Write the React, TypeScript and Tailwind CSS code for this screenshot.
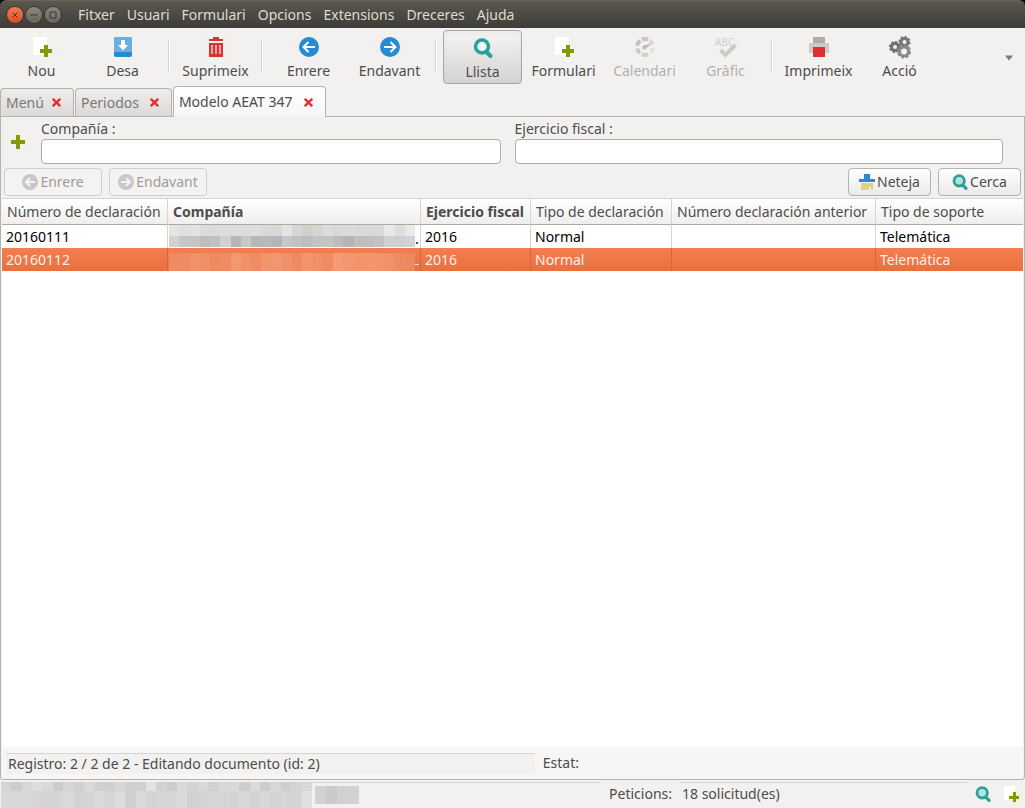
import clsx from "clsx";
import type { ReactNode } from "react";

const menus = [
  "Fitxer",
  "Usuari",
  "Formulari",
  "Opcions",
  "Extensions",
  "Dreceres",
  "Ajuda",
];

type Tool = {
  label: string;
  icon: ReactNode;
  active?: boolean;
  disabled?: boolean;
};

const toolGroups: Tool[][] = [
  [
    { label: "Nou", icon: <NewIcon /> },
    { label: "Desa", icon: <SaveIcon /> },
  ],
  [{ label: "Suprimeix", icon: <TrashIcon /> }],
  [
    { label: "Enrere", icon: <ArrowIcon /> },
    { label: "Endavant", icon: <ArrowIcon forward /> },
  ],
  [
    { label: "Llista", icon: <SearchIcon />, active: true },
    { label: "Formulari", icon: <NewIcon /> },
    { label: "Calendari", icon: <GaugeIcon />, disabled: true },
    { label: "Gràfic", icon: <SpellIcon />, disabled: true },
  ],
  [
    { label: "Imprimeix", icon: <PrintIcon /> },
    { label: "Acció", icon: <GearsIcon /> },
  ],
];

const columns = [
  { label: "Número de declaración", width: "w-[166px]" },
  { label: "Compañía", width: "w-[253px]", bold: true },
  { label: "Ejercicio fiscal", width: "w-[110px]", bold: true },
  { label: "Tipo de declaración", width: "w-[141px]" },
  { label: "Número declaración anterior", width: "w-[204px]" },
  { label: "Tipo de soporte", width: "" },
];

const greyTop =
  "#e4e4e4 #e0dfde #e3e2e1 #dadddf #d9dcde #dddddd #e0dcdc #dddbdc #dcdfe2 #d9d9d9 #d8d8d9 #e4e4e3 #d6d6d6 #d0d0cf #d5d5d4 #dcdcdc #d8d8d8 #dbdbdb #d9d9d9 #dcd8d9 #d9d9da #e7e9eb #dedede #e9e9e9";
const greyBottom =
  "#d4d1ce #c4c7c9 #c7c3c2 #bcbdbe #bfc2c3 #d4d0cf #b5b5ba #cac7c4 #b7b7bb #b9b9bb #b4b5b8 #c6c7ca #c3c1c2 #bdbebf #c3c2c4 #c4c4c4 #bdbdc0 #b4b4b5 #c0bfc0 #bfbfc0 #c3c3c6 #d0d0d2 #cfcfd2 #d3d1d3";
const orangeBlocks =
  "#f08a60 #f08b63 #f1906a #f08e67 #ef8960 #f08b62 #f39871 #f1906a #f08b63 #f1936b #f3966f #f1916a #f08a61 #f3946e #f28f68 #ef8a61 #f59b74 #f4966f #f2936b #f3956d #f2936b #f1906a #ef8a61 #ee885f";
const userTop =
  "#d5d5d5 #cccdcf #d8d8d7 #dedede #d9d9d9 #cbcccc #d6d6d6 #d1d1d1 #dadada #d3d0ce #cfd0d2 #d7d7d7 #d3cfcd #d0d0d1 #e0e2e4 #d2d2d3 #cdcccd #d9d9d9 #d2d2d2 #d9d9da #d1d1d1 #d8d8d7 #d9d9da #cdcdcf #dadada #cbccce #d8d8d8 #d0cdca #d4d4d5 #d8d8d8";
const userBottom =
  "#d8d8d7 #d5d8d7 #d7d7d8 #d7d6d5 #d4d4d3 #d5d6d5 #dadada #d2d3d3 #d5d5d4 #dad9d9 #d4d5d5 #dcdcdb #cfd0cf #dadada #d4d4d4 #d6d6d7 #d6d6d5 #dadada #d1d1d2 #d3d3d3 #d5d5d6 #d6d6d6 #d4d4d4 #d7d7d6 #d3d3d3 #d8d8d8 #d4d4d4 #d6d6d6 #d2d4d8 #dfdfe0";

export default function App() {
  return (
    <div className="flex min-h-screen flex-col bg-[#f2f1f0] font-['Noto_Sans','Open_Sans',sans-serif] text-sm leading-5 text-[#4c4c4c]">
      <TitleBar />
      <Toolbar />
      <TabBar />
      <main className="flex flex-1 flex-col rounded-b-sm border-x border-b border-[#b6b3ae] px-px">
        <SearchForm />
        <div className="flex-1 bg-white">
          <ResultsTable />
        </div>
        <div className="flex h-8 items-center bg-[#f6f6f6] pl-1">
          <div className="h-[21px] w-[52%] border-t border-[#d7d5d3] bg-[#f2f1f0] pl-0.5">
            Registro: 2 / 2 de 2 - Editando documento (id: 2)
          </div>
          <div className="pl-2">Estat:</div>
        </div>
      </main>
      <StatusBar />
    </div>
  );
}

function TitleBar() {
  return (
    <header className="bg-black">
      <div className="flex h-7 items-center rounded-t-md border-t border-[#66645b] bg-linear-to-b from-[#5b584f] to-[#3d3c37] pl-[7px]">
        <div className="flex gap-[3px]">
          <WindowButton label="Close" close>
            <path d="M5.5 5.5l5 5M10.5 5.5l-5 5" />
          </WindowButton>
          <WindowButton label="Minimize">
            <path d="M4.500 8h7" />
          </WindowButton>
          <WindowButton label="Maximize">
            <path d="M5 5h6v6H5z" />
          </WindowButton>
        </div>
        <nav className="ml-[17px] flex gap-3 text-[#dfdbd2]">
          {menus.map((menu) => (
            <button key={menu} type="button">
              {menu}
            </button>
          ))}
        </nav>
      </div>
    </header>
  );
}

function WindowButton({
  label,
  close,
  children,
}: {
  label: string;
  close?: boolean;
  children: ReactNode;
}) {
  return (
    <button
      aria-label={label}
      className={clsx(
        "size-4 rounded-full ring-1 ring-[#35342f]",
        close
          ? "bg-linear-to-b from-[#f47c54] to-[#df4b1c]"
          : "bg-linear-to-b from-[#8b897f] to-[#66645b]",
      )}
      type="button"
    >
      <svg className="size-4" fill="none" stroke="#3c3b37" viewBox="0 0 16 16">
        {children}
      </svg>
    </button>
  );
}

function Toolbar() {
  return (
    <div className="flex h-[58px] items-start justify-between pt-0.5 pr-3 pl-px">
      <div className="flex">
        {toolGroups.map((group, index) => (
          <div className="flex" key={group[0].label}>
            {index > 0 && (
              <div className="mx-[5px] mt-2.5 h-8 w-0.5 border-l border-[#d6d4d2] bg-white" />
            )}
            {group.map((tool) => (
              <ToolButton key={tool.label} tool={tool} />
            ))}
          </div>
        ))}
      </div>
      <button aria-label="More" className="mt-[25px]" type="button">
        <svg className="h-[6px] w-2" viewBox="0 0 8 6">
          <path d="M0 .5h8L4 5.500z" fill="#7b7975" />
        </svg>
      </button>
    </div>
  );
}

function ToolButton({ tool }: { tool: Tool }) {
  return (
    <button
      className={clsx(
        "flex h-[54px] flex-col items-center border",
        tool.active
          ? "mx-px w-[79px] rounded border-[#a9a6a2] bg-linear-to-b from-[#f4f4f3] to-[#d6d4d2] pt-[7px] shadow-inner"
          : "w-[81px] border-transparent pt-1.5",
        tool.disabled && "text-[#b3b0ad]",
      )}
      disabled={tool.disabled}
      type="button"
    >
      {tool.icon}
      <span className="mt-1">{tool.label}</span>
    </button>
  );
}

function TabBar() {
  return (
    <div className="flex h-[31px] items-end gap-px border-b border-[#b6b3ae]">
      <Tab className="min-w-[73px]" label="Menú" />
      <Tab className="min-w-[97px]" label="Periodos" />
      <Tab active className="min-w-[153px]" label="Modelo AEAT 347" />
    </div>
  );
}

function Tab({
  label,
  active,
  className,
}: {
  label: string;
  active?: boolean;
  className: string;
}) {
  return (
    <div
      className={clsx(
        "flex items-center justify-between gap-2 rounded-t border border-b-0 border-[#b6b3ae] pr-3 pl-[5px]",
        active
          ? "-mb-px h-[31px] bg-linear-to-b from-white to-[#f6f6f6]"
          : "h-7 bg-linear-to-b from-[#ededec] to-[#dcdad8] text-[#7b7875]",
        className,
      )}
    >
      <button type="button">{label}</button>
      <button aria-label={`Tanca ${label}`} type="button">
        <svg
          className="size-[9px]"
          stroke="#dc322f"
          strokeWidth="2.400"
          viewBox="0 0 9 9"
        >
          <path d="M.8.8l7.400 7.400M8.200.8L.8 8.200" />
        </svg>
      </button>
    </div>
  );
}

function SearchForm() {
  return (
    <form className="border-b border-[#d7d5d3] pb-0.5">
      <div className="flex pt-0.5 pr-5">
        <button
          aria-label="Afegeix"
          className="flex w-[39px] items-center pl-[9px]"
          type="button"
        >
          <svg className="size-3.5" fill="#859900" viewBox="0 0 14 14">
            <path d="M5 0h4v5h5v4H9v5H5V9H0V5h5z" />
          </svg>
        </button>
        <div className="flex flex-1 gap-3.5">
          <Field className="flex-[460]" id="company" label="Compañía :" />
          <Field className="flex-[489]" id="year" label="Ejercicio fiscal :" />
        </div>
      </div>
      <div className="mt-1 flex justify-between pr-0.5 pl-0.5">
        <div className="flex gap-[7px]">
          <FormButton disabled icon={<SmallArrowIcon />} label="Enrere" />
          <FormButton
            disabled
            icon={<SmallArrowIcon forward />}
            label="Endavant"
          />
        </div>
        <div className="flex gap-[7px]">
          <FormButton icon={<BrushIcon />} label="Neteja" />
          <FormButton icon={<SearchIcon small />} label="Cerca" />
        </div>
      </div>
    </form>
  );
}

function Field({
  id,
  label,
  className,
}: {
  id: string;
  label: string;
  className: string;
}) {
  return (
    <div className={className}>
      <label className="block" htmlFor={id}>
        {label}
      </label>
      <input
        className="block h-[25px] w-full rounded border border-[#aeaba7] bg-white px-1.5"
        id={id}
        type="text"
      />
    </div>
  );
}

function FormButton({
  icon,
  label,
  disabled,
}: {
  icon: ReactNode;
  label: string;
  disabled?: boolean;
}) {
  return (
    <button
      className={clsx(
        "flex h-7 items-center justify-center gap-0.5 rounded border",
        disabled
          ? "w-[98px] border-[#d0cecb] bg-[#f4f3f2] text-[#9f9c99]"
          : "w-[83px] border-[#b6b3ae] bg-linear-to-b from-white to-[#ebeae9]",
      )}
      disabled={disabled}
      type="button"
    >
      {icon}
      {label}
    </button>
  );
}

function ResultsTable() {
  return (
    <table className="w-full table-fixed border-separate border-spacing-0">
      <thead>
        <tr className="h-[26px]">
          {columns.map((column) => (
            <th
              className={clsx(
                "overflow-hidden border-r border-b border-[#aeaba4] border-r-[#d7d5d3] bg-linear-to-b from-white to-[#efeeed] p-0 pt-px pl-[5px] text-left whitespace-nowrap last:border-r-0",
                column.bold ? "font-bold" : "font-normal",
                column.width,
              )}
              key={column.label}
              scope="col"
            >
              {column.label}
            </th>
          ))}
        </tr>
      </thead>
      <tbody>
        <ResultRow
          company={
            <div className="flex items-end pr-px pb-px pl-px">
              <div className="flex-1">
                <Blocks className="h-[11px]" colors={greyTop} />
                <Blocks className="h-[11px]" colors={greyBottom} />
              </div>
              <span className="w-1 leading-4">.</span>
            </div>
          }
          number="20160111"
        />
        <ResultRow
          company={
            <div className="flex items-end pt-1 pr-px pl-px">
              <Blocks className="h-[18px] flex-1" colors={orangeBlocks} />
              <span className="mb-1.5 h-px w-1 bg-[#fbd9cb]" />
            </div>
          }
          number="20160112"
          selected
        />
      </tbody>
    </table>
  );
}

function ResultRow({
  number,
  company,
  selected,
}: {
  number: string;
  company: ReactNode;
  selected?: boolean;
}) {
  const border = clsx(
    "border-r last:border-r-0",
    selected ? "border-[#d3683f]" : "border-[#d7d5d3]",
  );
  const cell = clsx(border, "p-0 pl-1");

  return (
    <tr
      aria-selected={selected}
      className={clsx(
        "h-[23px]",
        selected
          ? "bg-linear-to-b from-[#f37e50] to-[#eb6f3c] text-[#fdf0ea]"
          : "text-black",
      )}
    >
      <td className={cell}>{number}</td>
      <td className={clsx(border, "p-0")}>{company}</td>
      <td className={cell}>2016</td>
      <td className={cell}>Normal</td>
      <td className={cell} />
      <td className={cell}>Telemática</td>
    </tr>
  );
}

/** Pixelated strip that hides private text. */
function Blocks({ colors, className }: { colors: string; className: string }) {
  return (
    <div className={clsx("flex", className)}>
      {colors.split(" ").map((color, index) => (
        <div className="flex-1" key={index} style={{ backgroundColor: color }} />
      ))}
    </div>
  );
}

function StatusBar() {
  return (
    <footer className="flex h-7 items-start">
      <div className="mt-0.5 ml-px w-[311px]">
        <Blocks className="h-[9px]" colors={userTop} />
        <Blocks className="h-[17px]" colors={userBottom} />
      </div>
      <div className="mt-0.5 flex-1 border-t border-[#d7d5d3] pt-[3px]">
        <Blocks
          className="ml-[3px] h-[18px] w-11"
          colors="#d2d2d2 #cbc9ca #d1d1d1 #d3d2d2"
        />
      </div>
      <div className="mt-1 px-2">Peticions:</div>
      <div className="mt-0.5 w-[287px] border-t border-[#d7d5d3] pt-px pl-0.5">
        18 solicitud(es)
      </div>
      <div className="mt-1.5 mr-1.5 ml-2 flex gap-3">
        <SearchIcon small />
        <NewIcon small />
      </div>
    </footer>
  );
}

function NewIcon({ small }: { small?: boolean }) {
  return (
    <svg
      className={small ? "size-4" : "size-5"}
      shapeRendering="crispEdges"
      viewBox="0 0 20 20"
    >
      <path d="M1 0h14v18H1z" fill="#fff" />
      <path d="M12 8h4v4h4v4h-4v4h-4v-4H8v-4h4z" fill="#859900" />
    </svg>
  );
}

function SaveIcon() {
  return (
    <svg className="size-5" viewBox="0 0 20 20">
      <rect fill="#268bd2" height="20" rx="2" width="18" x="1" />
      <path d="M1 2a2 2 0 0 1 2-2h14a2 2 0 0 1 2 2v13H1z" fill="#6caee0" />
      <path d="M8 3h4v5h3l-5 5.500L5 8h3z" fill="#fff" />
    </svg>
  );
}

function TrashIcon() {
  return (
    <svg className="size-5" shapeRendering="crispEdges" viewBox="0 0 20 20">
      <path d="M7 0h6v2h4v2H3V2h4zM3 6h14v14H3z" fill="#dc322f" />
      <path d="M5 8h2v9H5zM9 8h2v9H9zM13 8h2v9h-2z" fill="#f0a7a5" />
    </svg>
  );
}

function ArrowIcon({ forward }: { forward?: boolean }) {
  return (
    <svg className="size-5" fill="none" viewBox="0 0 20 20">
      <circle cx="10" cy="10" fill="#268bd2" r="10" />
      <path
        d={forward ? "M4 10h11M10.5 5l5 5-5 5" : "M16 10H5M9.500 5l-5 5 5 5"}
        stroke="#fff"
        strokeWidth="2"
      />
    </svg>
  );
}

function SmallArrowIcon({ forward }: { forward?: boolean }) {
  return (
    <svg className="size-4" fill="none" viewBox="0 0 16 16">
      <circle cx="8" cy="8" fill="#c6c8ca" r="8" />
      <path
        d={forward ? "M3 8h9M8 4l4 4-4 4" : "M13 8H4M8 4L4 8l4 4"}
        stroke="#f4f3f2"
        strokeWidth="2"
      />
    </svg>
  );
}

function SearchIcon({ small }: { small?: boolean }) {
  return (
    <svg
      className={small ? "size-4" : "size-5"}
      stroke="#2aa198"
      viewBox="0 0 20 20"
    >
      <path d="M13.500 14l4 4" strokeLinecap="round" strokeWidth="4" />
      <circle
        cx="9"
        cy="8.500"
        fill={small ? "#b7dfdc" : "#eef4f4"}
        r="6.500"
        strokeWidth="3.500"
      />
    </svg>
  );
}

function GaugeIcon() {
  return (
    <svg className="size-5" fill="none" strokeWidth="4" viewBox="0 0 20 20">
      <path d="M6.900 2.600a8 8 0 0 1 6.200 0" stroke="#cdc5c5" />
      <path d="M14.800 3.600a8 8 0 0 1 2.800 4" stroke="#d9d9d3" />
      <path d="M17.900 11a8 8 0 0 1-2.600 5" stroke="#e3e2dc" />
      <path d="M13.100 17.400a8 8 0 0 1-6.200 0" stroke="#cfd1ca" />
      <path d="M5 16.200a8 8 0 0 1-2.800-4.700" stroke="#c6cace" />
      <path d="M2.200 8.600a8 8 0 0 1 3-5" stroke="#c1bfc0" />
      <path d="M17 6l-6 5.500a2 2 0 1 1-2-3z" fill="#bdbbba" />
    </svg>
  );
}

function SpellIcon() {
  return (
    <svg className="h-5 w-6 overflow-visible" viewBox="0 0 24 20">
      <text
        className="font-['Noto_Sans',sans-serif] text-[10px]"
        fill="#cfceca"
        x="1"
        y="9"
      >
        ABC
      </text>
      <path
        d="M6.500 13l5 5L21.500 8"
        fill="none"
        stroke="#cacbc5"
        strokeWidth="4"
      />
    </svg>
  );
}

function PrintIcon() {
  return (
    <svg className="size-5" shapeRendering="crispEdges" viewBox="0 0 20 20">
      <path d="M4 0h12v6H4z" fill="#adadad" />
      <path d="M0 6h20v10H0z" fill="#cbcbcb" />
      <path d="M4 10h12v10H4z" fill="#dc322f" />
    </svg>
  );
}

function GearsIcon() {
  const gears = [
    { cx: 6.500, cy: 10, r: 3.500, color: "#6f6f6f" },
    { cx: 16, cy: 5, r: 3.500, color: "#777777" },
    { cx: 15.500, cy: 14.500, r: 4.500, color: "#8a8a8a" },
  ];

  return (
    <svg className="h-5 w-6 overflow-visible" fill="none" viewBox="0 0 23 20">
      {gears.map(({ cx, cy, r, color }) => (
        <g key={color} stroke={color}>
          <circle cx={cx} cy={cy} r={r} strokeWidth="3" />
          <circle
            cx={cx}
            cy={cy}
            pathLength="16"
            r={r + 1.5}
            strokeDasharray="1.200 .8"
            strokeWidth="2.200"
          />
        </g>
      ))}
    </svg>
  );
}

function BrushIcon() {
  return (
    <svg className="size-4" shapeRendering="crispEdges" viewBox="0 0 16 16">
      <path d="M5 0h6v5h5v3H0V5h5z" fill="#268bd2" />
      <path d="M2 9h12v7h-2v-3h-2v3H2z" fill="#e0d08a" />
    </svg>
  );
}
